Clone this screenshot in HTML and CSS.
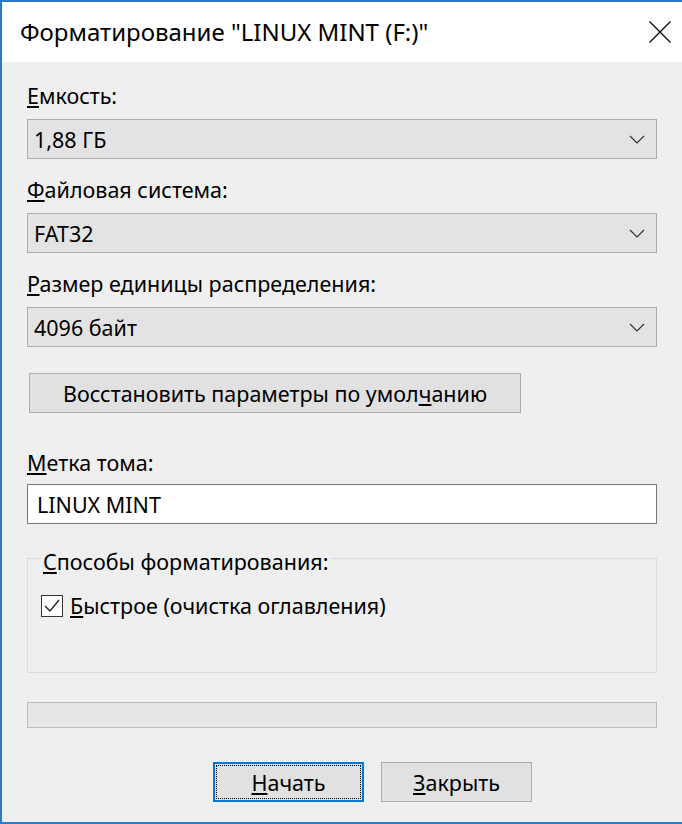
FILE: index.html
```html
<!DOCTYPE html>
<html lang="ru">
<head>
<meta charset="utf-8">
<title>Форматирование</title>
<link rel="stylesheet" href="styles.css">
</head>
<body>
<div class="window">
  <div class="titlebar">
    <span class="title">Форматирование "LINUX MINT (F:)"</span>
    <svg class="close" width="24" height="24" viewBox="0 0 24 24"><path d="M1.5 1.5 L22.5 22.5 M22.5 1.5 L1.5 22.5" /></svg>
  </div>
  <div class="content">
    <div class="label first"><u>Е</u>мкость:</div>
    <div class="combo"><span>1,88 ГБ</span><svg class="chev" width="16" height="9" viewBox="0 0 16 9"><path d="M1 1 L8 8 L15 1" /></svg></div>
    <div class="label"><u>Ф</u>айловая система:</div>
    <div class="combo"><span>FAT32</span><svg class="chev" width="16" height="9" viewBox="0 0 16 9"><path d="M1 1 L8 8 L15 1" /></svg></div>
    <div class="label"><u>Р</u>азмер единицы распределения:</div>
    <div class="combo"><span>4096 байт</span><svg class="chev" width="16" height="9" viewBox="0 0 16 9"><path d="M1 1 L8 8 L15 1" /></svg></div>
    <div class="restore">Восстановить параметры по умол<u>ч</u>анию</div>
    <div class="label volume"><u>М</u>етка тома:</div>
    <div class="input">LINUX MINT</div>
    <div class="group">
      <div class="legend"><u>С</u>пособы форматирования:</div>
      <div class="check-row">
        <svg class="checkbox" width="22" height="22" viewBox="0 0 22 22"><rect x="0.5" y="0.5" width="21" height="21" /><path d="M4 11 L9 16 L18 5" /></svg>
        <span><u>Б</u>ыстрое (очистка оглавления)</span>
      </div>
    </div>
    <div class="progress"></div>
    <div class="buttons">
      <div class="btn primary"><span class="focus"><u>Н</u>ачать</span></div>
      <div class="btn"><u>З</u>акрыть</div>
    </div>
  </div>
</div>
</body>
</html>
```
FILE: styles.css
```css
html, body {
  margin: 0;
  padding: 0;
  background: #f0f0f0;
}
body {
  font-family: "Noto Sans", "Open Sans", sans-serif;
  font-size: 21.5px;
  color: #000;
}
.window {
  width: 680px;
  height: 820px;
  border-left: 2px solid #2b7cc4;
  border-top: 2px solid #2b7cc4;
  border-bottom: 2px solid #2b7cc4;
  display: flex;
  flex-direction: column;
  background: #efefef;
}
.titlebar {
  height: 60px;
  background: #ffffff;
  display: flex;
  align-items: center;
  padding-left: 18px;
  padding-right: 10px;
}
.title {
  font-size: 24px;
  flex: 1;
  padding-bottom: 2px;
}
.close path {
  stroke: #111;
  stroke-width: 1.4;
  fill: none;
}
.content {
  flex: 1;
  padding: 0 25px;
  display: flex;
  flex-direction: column;
}
.label {
  line-height: 24px;
  margin-top: 19px;
}
.label.first {
  margin-top: 22px;
}
.label.volume {
  margin-top: 38px;
}
.combo {
  margin-top: 11px;
  height: 38px;
  border: 1px solid #adadad;
  background: #e3e3e3;
  display: flex;
  align-items: center;
  padding: 0 11px 0 6px;
}
.combo span {
  flex: 1;
}
.chev path {
  stroke: #333;
  stroke-width: 1.2;
  fill: none;
}
.restore {
  margin-top: 26px;
  margin-left: 2px;
  width: 490px;
  height: 38px;
  border: 1px solid #adadad;
  background: #e1e1e1;
  display: flex;
  align-items: center;
  justify-content: center;
}
.input {
  margin-top: 9px;
  height: 38px;
  border: 1px solid #7a7a7a;
  background: #ffffff;
  display: flex;
  align-items: center;
  padding-left: 9px;
}
.group {
  margin-top: 34px;
  height: 113px;
  border: 1px solid #dcdcdc;
  display: flex;
  flex-direction: column;
}
.legend {
  align-self: flex-start;
  line-height: 24px;
  margin: -9px 0 0 13px;
  padding: 0 2px;
  background: #efefef;
}
.check-row {
  margin-top: 17px;
  margin-left: 13px;
  display: flex;
  align-items: center;
  gap: 7px;
}
.checkbox rect {
  fill: #ffffff;
  stroke: #333;
  stroke-width: 1;
}
.checkbox path {
  stroke: #222;
  stroke-width: 1.4;
  fill: none;
}
.progress {
  margin-top: 29px;
  height: 24px;
  border: 1px solid #bcbcbc;
  background: #e6e6e6;
}
.buttons {
  margin-top: 34px;
  display: flex;
  gap: 17px;
  padding-left: 186px;
}
.btn {
  width: 149px;
  height: 38px;
  border: 1px solid #adadad;
  background: #e1e1e1;
  display: flex;
  align-items: center;
  justify-content: center;
}
.btn.primary {
  width: 145px;
  height: 34px;
  border: 2px solid #0078d7;
  padding: 1px;
}
.focus {
  flex: 1;
  align-self: stretch;
  border: 1px dotted #000;
  display: flex;
  align-items: center;
  justify-content: center;
}
```
